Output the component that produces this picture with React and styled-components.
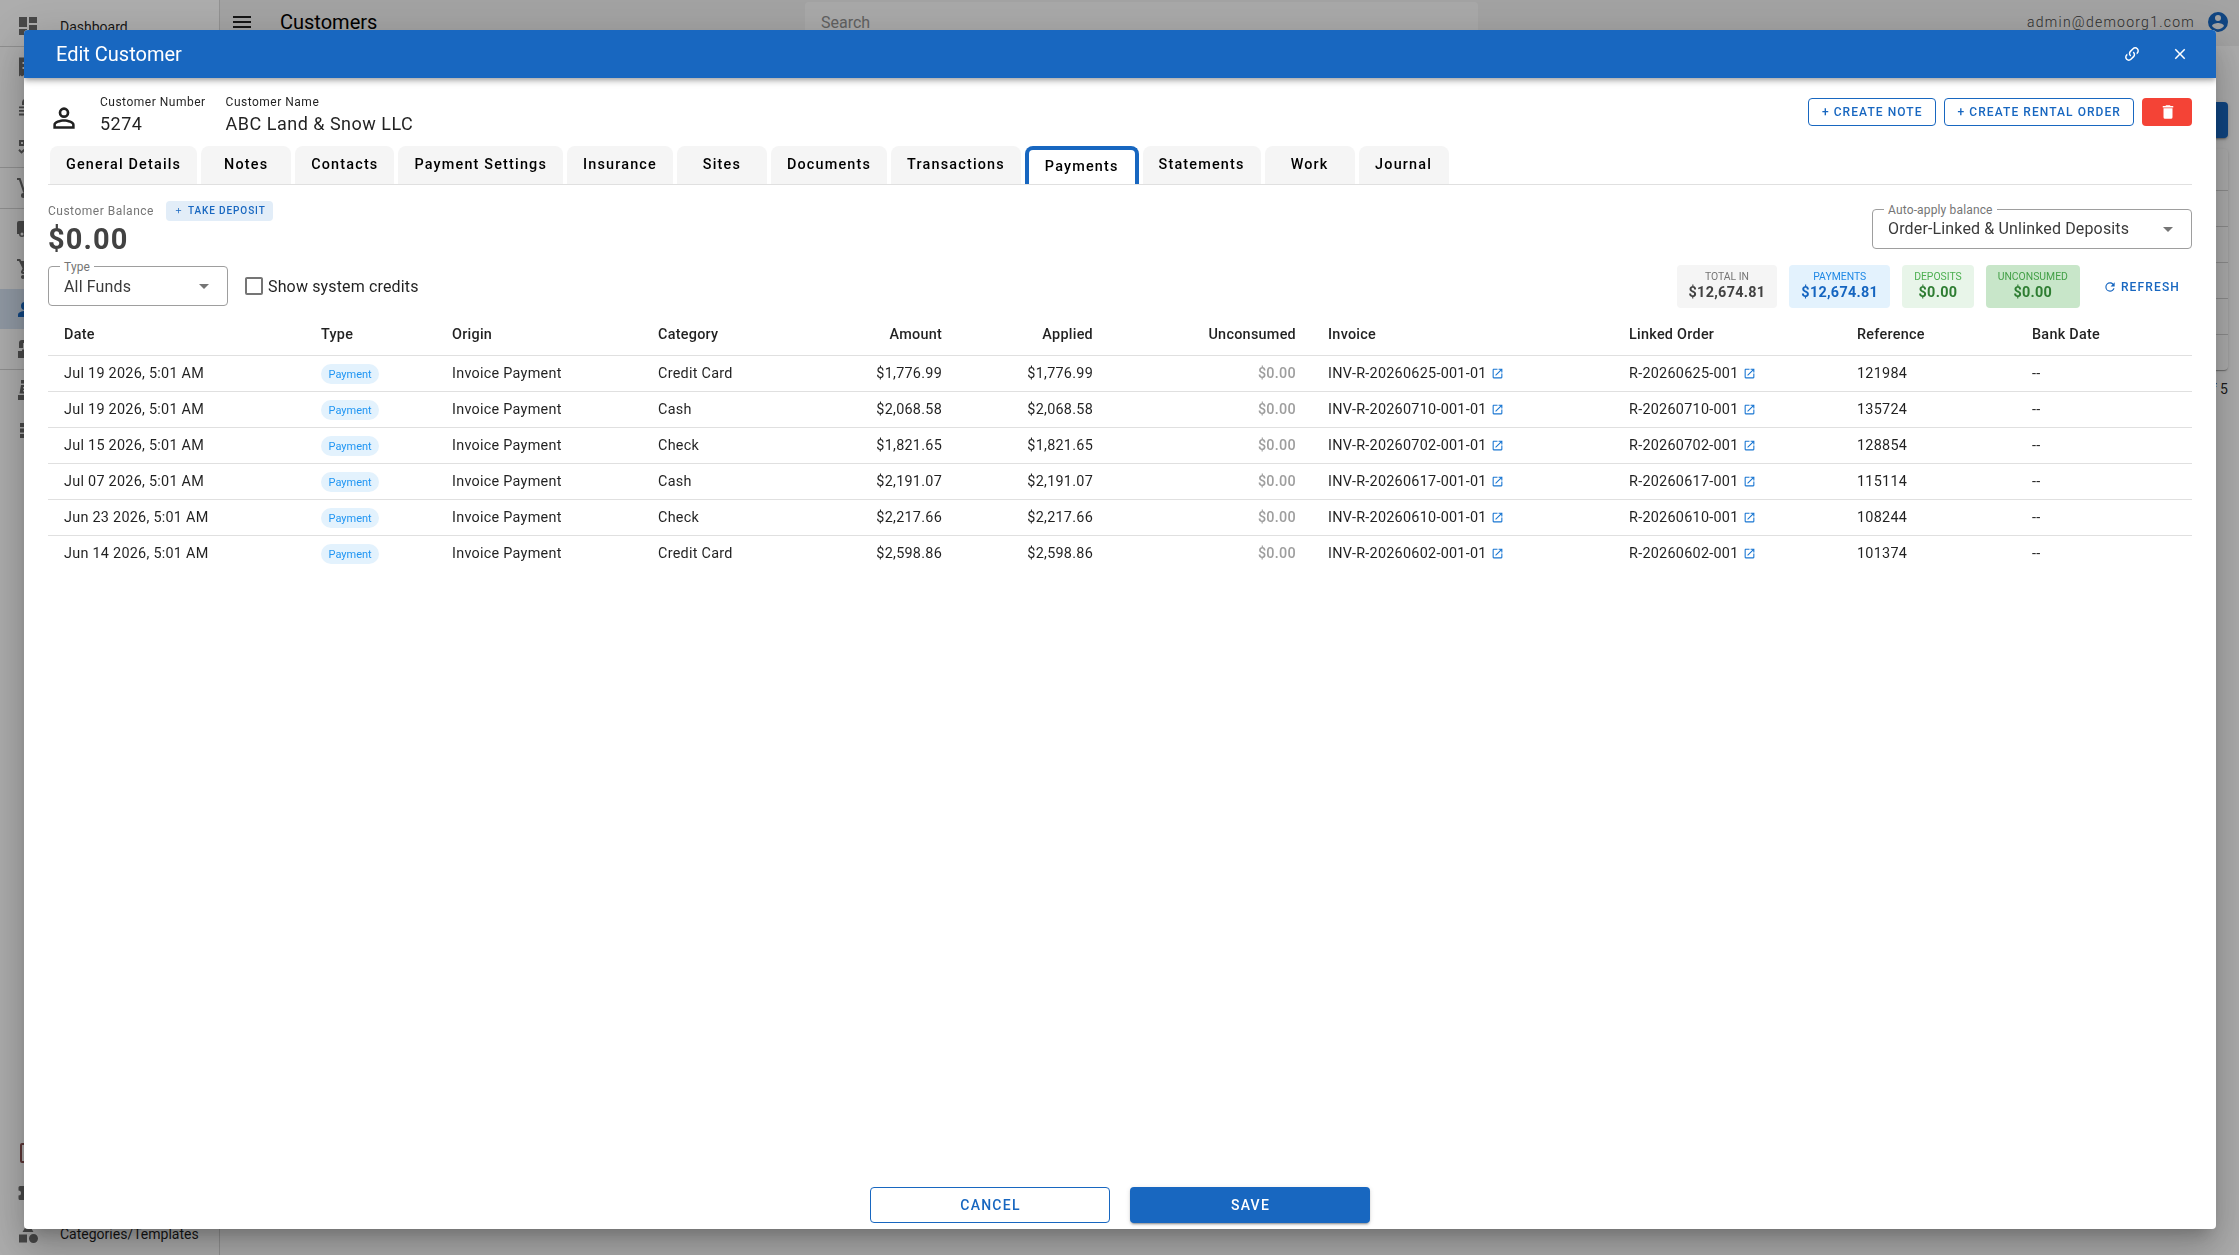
import React from 'react';
import styled, { createGlobalStyle } from 'styled-components';

const GlobalStyle = createGlobalStyle`
  *, *::before, *::after { box-sizing: border-box; }
  html, body { margin: 0; height: 100%; overflow: hidden; }
  body { font-family: Roboto, "Liberation Sans", sans-serif; font-size: 14px; color: rgba(0, 0, 0, 0.87); background: #fff; }
  button { font-family: inherit; }
`;

const P = {
  dashboard: 'M13,3V9H21V3M13,21H21V11H13M3,21H11V15H3M3,13H11V3H3V13Z',
  receipt: 'M3,2.5H21V21.5L19.5,20.2L18,21.5L16.500,20.2L15,21.500L13.500,20.2L12,21.5L10.5,20.2L9,21.5L7.500,20.2L6,21.5L4.5,20.2L3,21.5V2.5M6.5,7V9H17.500V7H6.5M6.5,12V14H17.5V12H6.5Z',
  stack: 'M3,11.5H21V13.2H3V11.5M3,15H21V16.8H3V15M3,18.600H21V20.4H3V18.6M7,4.500H17V10H6V7Z',
  checks: 'M3,5H9V11H3V5M5,7V9H7V7H5M11,7H21V9H11V7M2.300,15.500L3.700,14.100L5.500,15.9L9.500,12.400L10.9,13.8L5.500,18.800L2.300,15.500M12,15H21V17H12V15Z',
  dolly: 'M1,2H4.500L8.800,14.500L16,11L17,13L8,17.500L7,16L3,4H1V2M7.500,17A2.500,2.500 0 1,1 7.490,22A2.500,2.500 0 0,1 7.500,17M8,4L14,2L16,9L10,11.500L8,4Z',
  truck: 'M3,4A2,2 0 0,0 1,6V17H3A3,3 0 0,0 6,20A3,3 0 0,0 9,17H15A3,3 0 0,0 18,20A3,3 0 0,0 21,17H23V12L20,8H17V4M6,15.500A1.500,1.500 0 1,1 6,18.500A1.500,1.500 0 0,1 6,15.500Z',
  cart: 'M17,18A2,2 0 0,1 19,20A2,2 0 0,1 17,22C15.89,22 15,21.1 15,20C15,18.89 15.89,18 17,18M1,2H4.27L5.21,4H20A1,1 0 0,1 21,5C21,5.17 20.95,5.34 20.88,5.5L17.3,11.97C16.96,12.58 16.3,13 15.55,13H8.1L7.2,14.63L7.17,14.75A0.25,0.25 0 0,0 7.42,15H19V17H7C5.89,17 5,16.1 5,15C5,14.65 5.09,14.32 5.24,14.04L6.6,11.59L3,4H1V2M7,18A2,2 0 0,1 9,20A2,2 0 0,1 7,22C5.89,22 5,21.1 5,20C5,18.89 5.89,18 7,18Z',
  people: 'M9,5A4,4 0 0,1 13,9A4,4 0 0,1 9,13A4,4 0 0,1 5,9A4,4 0 0,1 9,5M9,14C12,14 17,15 17,18V20H2V18C2,15 6,14 9,14M16,5A4,4 0 1,1 15,12.800A5.800,5.800 0 0,0 15,5.200Z',
  archive: 'M6,3H18A3,3 0 0,1 21,6V11H17V6H7V11H3V6A3,3 0 0,1 6,3M2,14H6V12.500H9V14H15V12.500H18V14H22V21H2V14Z',
  register: 'M2,17H22V22H2V17M5,7H19L20.500,15.500H3.500L5,7M5,2H11V5.500H5V2M7,9V10.5H9V9H7M7,12V13.5H9V12H7Z',
  list: 'M4,5H9V9H4V5M4,10.500H9V14.500H4V10.5M4,16H9V20H4V16M10.500,5H21V9H10.500V5M10.500,10.5H21V14.5H10.500V10.500M10.500,16H21V20H10.500V16Z',
  page: 'M6,2H18A2,2 0 0,1 20,4V20A2,2 0 0,1 18,22H6A2,2 0 0,1 4,20V4A2,2 0 0,1 6,2M6,4V20H18V4H6Z',
  puzzle: 'M4,5H9A2.500,2.500 0 0,1 14,5H19V10A2.500,2.500 0 0,1 19,15V19H14A2.500,2.500 0 0,0 9,19H4A1.500,1.500 0 0,1 2.500,17.500V14.500A2.500,2.500 0 0,0 2.500,9.500V6.500A1.500,1.500 0 0,1 4,5Z',
  shape: 'M11,13.5V21.5H3V13.5H11M12,2L17.5,11H6.5L12,2M17.5,13C20,13 22,15 22,17.5C22,20 20,22 17.5,22C15,22 13,20 13,17.5C13,15 15,13 17.5,13Z',
  menu: 'M3,6H21V8H3V6M3,11H21V13H3V11M3,16H21V18H3V16Z',
  accountCircle: 'M12,19.2C9.5,19.2 7.29,17.92 6,16C6.03,14 10,12.9 12,12.9C14,12.9 17.97,14 18,16C16.71,17.92 14.5,19.2 12,19.2M12,5A3,3 0 0,1 15,8A3,3 0 0,1 12,11A3,3 0 0,1 9,8A3,3 0 0,1 12,5M12,2A10,10 0 0,0 2,12A10,10 0 0,0 12,22A10,10 0 0,0 22,12C22,6.47 17.5,2 12,2Z',
  link: 'M10.59,13.41C11,13.8 11,14.44 10.59,14.83C10.2,15.22 9.56,15.22 9.17,14.83C7.22,12.88 7.22,9.71 9.17,7.76V7.76L12.71,4.22C14.66,2.27 17.83,2.27 19.78,4.22C21.73,6.17 21.73,9.34 19.78,11.29L18.29,12.78C18.3,11.96 18.17,11.14 17.89,10.36L18.36,9.88C19.54,8.71 19.54,6.81 18.36,5.64C17.19,4.46 15.29,4.46 14.12,5.64L10.59,9.17C9.41,10.34 9.41,12.24 10.59,13.41M13.41,9.17C13.8,8.78 14.44,8.78 14.83,9.17C16.78,11.12 16.78,14.29 14.83,16.24V16.24L11.29,19.78C9.34,21.73 6.17,21.73 4.22,19.78C2.27,17.83 2.27,14.66 4.22,12.71L5.71,11.22C5.7,12.04 5.83,12.86 6.11,13.65L5.64,14.12C4.46,15.29 4.46,17.19 5.64,18.36C6.81,19.54 8.71,19.54 9.88,18.36L13.41,14.83C14.59,13.66 14.59,11.76 13.41,10.59C13,10.2 13,9.56 13.41,9.17Z',
  close: 'M19,6.41L17.59,5L12,10.59L6.41,5L5,6.41L10.59,12L5,17.59L6.41,19L12,13.41L17.59,19L19,17.59L13.41,12L19,6.41Z',
  account: 'M12,4A4,4 0 0,1 16,8A4,4 0 0,1 12,12A4,4 0 0,1 8,8A4,4 0 0,1 12,4M12,6A2,2 0 0,0 10,8A2,2 0 0,0 12,10A2,2 0 0,0 14,8A2,2 0 0,0 12,6M12,13C14.67,13 20,14.33 20,17V20H4V17C4,14.33 9.33,13 12,13M12,14.9C9.03,14.9 5.9,16.36 5.9,17V18.1H18.1V17C18.1,16.36 14.97,14.9 12,14.9Z',
  trash: 'M19,4H15.5L14.5,3H9.5L8.5,4H5V6H19M6,19A2,2 0 0,0 8,21H16A2,2 0 0,0 18,19V7H6V19Z',
  plus: 'M19,13H13V19H11V13H5V11H11V5H13V11H19V13Z',
  down: 'M7,10L12,15L17,10H7Z',
  box: 'M19,3H5C3.89,3 3,3.89 3,5V19A2,2 0 0,0 5,21H19A2,2 0 0,0 21,19V5C21,3.89 20.1,3 19,3M19,5V19H5V5H19Z',
  refresh: 'M17.65,6.35C16.2,4.9 14.21,4 12,4A8,8 0 0,0 4,12A8,8 0 0,0 12,20C15.73,20 18.84,17.45 19.73,14H17.65C16.83,16.33 14.61,18 12,18A6,6 0 0,1 6,12A6,6 0 0,1 12,6C13.66,6 15.14,6.69 16.22,7.78L13,11H20V4L17.65,6.35Z',
  open: 'M14,3V5H17.59L7.76,14.83L9.17,16.24L19,6.41V10H21V3M19,19H5V5H12V3H5C3.89,3 3,3.9 3,5V19A2,2 0 0,0 5,21H19A2,2 0 0,0 21,19V12H19V19Z',
};

const Svg = styled.svg`
  display: block;
  flex: none;
  width: ${p => p.$size}px;
  height: ${p => p.$size}px;
  fill: currentColor;
  fill-rule: evenodd;
`;
const Icon = ({ name, size = 24 }) => (
  <Svg $size={size} viewBox="0 0 24 24" aria-hidden="true"><path d={P[name]} /></Svg>
);

/* ---------- page behind the dialog ---------- */
const Page = styled.div`display: flex; height: 100vh; overflow: hidden;`;
const Sidebar = styled.nav`
  display: flex; flex-direction: column;
  width: 220px; flex: none;
  padding: 6px 0 2px;
  border-right: 1px solid #d8d8d8;
`;
const NavItem = styled.div`
  display: flex; align-items: center; gap: 20px;
  height: 40px; flex: none; padding: 0 16px;
  white-space: nowrap;
  color: ${p => (p.$active ? '#1867c0' : p.$tone || '#6b6b6b')};
  background: ${p => (p.$active ? '#d5e2f2' : 'transparent')};
`;
const NavText = styled.span`color: #1f1f1f; padding-top: 2px;`;
const NavRule = styled.div`height: 1px; flex: none; background: #d4d4d4;`;
const Spacer = styled.div`flex: 1;`;

const Main = styled.div`flex: 1; display: flex; flex-direction: column;`;
const AppBar = styled.header`
  display: flex; align-items: center;
  height: 46px; flex: none; padding: 0 9px 2px 10px;
  background: #f1f1f1;
`;
const PageTitle = styled.h1`margin: 0 0 0 26px; width: 525px; font-size: 20px; font-weight: 400; color: #000;`;
const Search = styled.div`
  width: 673px; height: 40px; padding: 1px 16px 0; border-radius: 4px;
  font-size: 16px; line-height: 40px; color: #8f8f8f; background: #fafafa;
`;
const User = styled.div`
  display: flex; align-items: center; gap: 11px; margin-left: auto;
  font-size: 14px; font-weight: 300; color: #444; letter-spacing: 1.25px;
`;
const UserIcon = styled.span`color: #1867c0;`;
const Content = styled.div`display: flex; flex-direction: column; align-items: flex-end; padding: 56px 11px 0 0;`;
const AddButton = styled.div`
  width: 120px; height: 36px; border-radius: 4px; background: #1867c0;
  box-shadow: 0 3px 1px -2px rgba(0,0,0,.2), 0 2px 2px rgba(0,0,0,.14), 0 1px 5px rgba(0,0,0,.12);
`;
const List = styled.div`
  width: 1980px; margin-top: 11px; border-radius: 4px;
  box-shadow: 0 2px 1px -1px rgba(0,0,0,.2), 0 1px 1px rgba(0,0,0,.14), 0 1px 3px rgba(0,0,0,.12);
`;
const ListRow = styled.div`
  height: ${p => (p.$head ? 41 : 36)}px;
  & + & { border-top: 1px solid #d0d0d0; }
`;
const Pager = styled.div`padding-top: 11px; font-size: 14px;`;

/* ---------- dialog ---------- */
const Scrim = styled.div`
  position: fixed; inset: 0;
  padding: 30px 23px 26px 24px;
  background: rgba(0, 0, 0, 0.32);
`;
const Dialog = styled.section`
  display: flex; flex-direction: column;
  height: 100%; overflow: hidden;
  border-radius: 4px; background: #fff;
  box-shadow: 0 11px 15px -7px rgba(0,0,0,.2), 0 24px 38px 3px rgba(0,0,0,.14), 0 9px 46px 8px rgba(0,0,0,.12);
`;
const TitleBar = styled.header`
  display: flex; align-items: center; gap: 30px;
  height: 48px; flex: none; padding: 0 27px 0 32px;
  color: #fff; background: #1867c0;
  box-shadow: 0 2px 4px -1px rgba(0,0,0,.2), 0 4px 5px rgba(0,0,0,.14), 0 1px 10px rgba(0,0,0,.12);
`;
const Title = styled.h2`margin: 0 auto 0 0; font-size: 20px; font-weight: 400;`;
const Body = styled.div`flex: 1; display: flex; flex-direction: column; padding: 0 24px 6px;`;

const Summary = styled.div`display: flex; height: 68px; flex: none;`;
const Avatar = styled.div`padding-top: 24px; width: 52px; color: #212121;`;
const Fact = styled.dl`margin: 0 20px 0 0; padding-top: 15px; letter-spacing: 0.5px;`;
const FactLabel = styled.dt`font-size: 12px; line-height: 18px;`;
const FactValue = styled.dd`margin: 0; font-size: 18px; line-height: 26px;`;
const Actions = styled.div`display: flex; gap: 8px; margin: 20px 0 0 auto;`;

const Button = styled.button`
  display: flex; align-items: center; justify-content: center;
  height: ${p => p.$h || 28}px;
  width: ${p => (p.$w ? `${p.$w}px` : 'auto')};
  padding: 0 12px 0 13px;
  border: 1px solid ${p => p.$border || 'transparent'};
  border-radius: 4px;
  font-size: ${p => p.$font || 12}px; font-weight: 500;
  letter-spacing: 0.0892857em; text-transform: uppercase; white-space: nowrap;
  color: ${p => p.$color || '#1867c0'};
  background: ${p => p.$bg || 'transparent'};
  box-shadow: ${p => (p.$raised ? '0 3px 1px -2px rgba(0,0,0,.2), 0 2px 2px rgba(0,0,0,.14), 0 1px 5px rgba(0,0,0,.12)' : 'none')};
`;

const Tabs = styled.div`
  display: flex; gap: 4px; height: 39px; flex: none; padding-left: 2px;
  border-bottom: 1px solid #e0e0e0;
`;
const Tab = styled.div`
  display: flex; align-items: center; justify-content: center;
  min-width: 90px; padding: 0 16px 2px;
  border-radius: 8px 8px 0 0;
  font-size: 14.4px; font-weight: 500; letter-spacing: 1.18px; color: #000;
  background: ${p => (p.$active ? '#fff' : '#f5f5f5')};
  border: 0 solid #1867c0;
  border-width: ${p => (p.$active ? '4px 4px 0' : '0')};
`;

const BalanceRow = styled.div`display: flex; justify-content: space-between; height: 80px; flex: none; padding-top: 16px;`;
const BalanceHead = styled.div`display: flex; align-items: center; gap: 12px; height: 20px; font-size: 12px; letter-spacing: 0.5px; color: #757575;`;
const Deposit = styled.button`
  display: flex; align-items: center; gap: 5px;
  height: 20px; width: 107px; padding: 0 0 1px 8px; border: 0; border-radius: 4px;
  font-size: 10px; font-weight: 500; letter-spacing: 0.0892857em; white-space: nowrap;
  color: #1867c0; background: #e2edf8;
`;
const Balance = styled.div`font-size: 29px; line-height: 36px; font-weight: 700; letter-spacing: 1.1px; color: #424242;`;

const SelectBox = styled.div`
  position: relative;
  display: flex; align-items: center; justify-content: space-between;
  width: ${p => p.$w}px; height: 40px; margin-top: ${p => p.$mt || 0}px; padding: 0 11px 0 15px;
  border: 1px solid #9e9e9e; border-radius: 4px;
  font-size: 16px; letter-spacing: 0.15px; color: #3a3a3a;
`;
const SelectLabel = styled.span`
  position: absolute; top: -8px; left: 11px; padding: 0 4px;
  font-size: 12px; line-height: 16px; color: #757575; background: #fff;
`;
const SelectValue = styled.span`padding-bottom: ${p => p.$lift || 0}px;`;
const Caret = styled.span`color: #757575;`;
const Select = ({ label, value, w, mt, lift }) => (
  <SelectBox $w={w} $mt={mt}>
    <SelectLabel>{label}</SelectLabel><SelectValue $lift={lift}>{value}</SelectValue><Caret><Icon name="down" /></Caret>
  </SelectBox>
);

const FilterRow = styled.div`display: flex; height: 43px; flex: none;`;
const Check = styled.label`
  display: flex; align-items: center; gap: 2px; height: 42px; margin-left: 14px;
  font-size: 16px; letter-spacing: 0.15px;
`;
const CheckIcon = styled.span`color: #757575;`;
const Totals = styled.div`display: flex; gap: 12px; margin-left: auto;`;
const Total = styled.div`
  height: 43px; padding: 4px 12px 0; border-radius: 4px; text-align: center;
  color: ${p => p.$value}; background: ${p => p.$bg};
`;
const TotalLabel = styled.div`font-size: 10.4px; line-height: 15px; color: ${p => p.$color};`;
const TotalValue = styled.div`font-size: 14.4px; line-height: 18px; font-weight: 700; letter-spacing: 0.3px;`;
const Refresh = styled.button`
  display: flex; align-items: center; gap: 4px; height: 43px;
  margin-left: 11px; padding: 0 12px; border: 0; background: none;
  font-size: 12px; font-weight: 500; letter-spacing: 1.15px; color: #1867c0;
`;

const Table = styled.div`display: flex; flex-direction: column;`;
const Row = styled.div`
  display: grid;
  grid-template-columns: 257px 131px 206px 316px 151px 203px 301px 228px 175px 1fr;
  flex: none;
  height: ${p => (p.$head ? 40 : 36)}px;
  margin-top: ${p => (p.$head ? 8 : 0)}px;
  padding-bottom: ${p => (p.$head ? 2 : 1)}px;
  font-weight: ${p => (p.$head ? 500 : 400)};
  font-size: 14.4px; letter-spacing: 0.27px; white-space: nowrap;
  border-bottom: 1px solid #e0e0e0;
  &:last-child { border-bottom-color: transparent; }
`;
const Cell = styled.div`
  display: flex; align-items: center; gap: 4px; padding: 0 16px;
  justify-content: ${p => (p.$right ? 'flex-end' : 'flex-start')};
  color: ${p => (p.$muted ? '#9e9e9e' : 'inherit')};
  font-weight: ${p => (p.$muted ? 500 : 'inherit')};
`;
const CategoryAmount = styled.div`display: flex; justify-content: space-between;`;
const Pill = styled.span`
  height: 20px; margin-top: 2px; padding: 0 7.500px; border-radius: 10px;
  font-size: 11px; line-height: 21px; letter-spacing: 0;
  color: #2196f3; background: #e3f2fd;
`;
const OpenIcon = styled.span`color: #1976d2; padding-top: 1px;`;
const Footer = styled.footer`display: flex; justify-content: center; gap: 20px; margin-top: auto;`;

const tabs = ['General Details', 'Notes', 'Contacts', 'Payment Settings', 'Insurance', 'Sites', 'Documents', 'Transactions', 'Payments', 'Statements', 'Work', 'Journal'];
const rows = [
  ['Jul 19 2026, 5:01 AM', 'Credit Card', '$1,776.99', '20260625-001', '121984'],
  ['Jul 19 2026, 5:01 AM', 'Cash', '$2,068.58', '20260710-001', '135724'],
  ['Jul 15 2026, 5:01 AM', 'Check', '$1,821.65', '20260702-001', '128854'],
  ['Jul 07 2026, 5:01 AM', 'Cash', '$2,191.07', '20260617-001', '115114'],
  ['Jun 23 2026, 5:01 AM', 'Check', '$2,217.66', '20260610-001', '108244'],
  ['Jun 14 2026, 5:01 AM', 'Credit Card', '$2,598.86', '20260602-001', '101374'],
];
const totals = [
  ['TOTAL IN', '$12,674.81', '#757575', '#424242', '#f5f5f5'],
  ['PAYMENTS', '$12,674.81', '#1e88e5', '#1565c0', '#e3f2fd'],
  ['DEPOSITS', '$0.00', '#4caf50', '#2e7d32', '#e8f5e9'],
  ['UNCONSUMED', '$0.00', '#43a047', '#2e7d32', '#c8e6c9'],
];
const nav = [
  ['dashboard', 'Dashboard'], null, ['receipt'], ['stack'], ['checks'], null, ['dolly'], null,
  ['truck'], ['cart'], ['people', '', true], ['archive'], null, ['register'], ['list'],
];

export default function App() {
  return (
    <>
      <GlobalStyle />
      <Page>
        <Sidebar>
          {nav.map((n, i) => n
            ? <NavItem key={i} $active={n[2]}><Icon name={n[0]} />{n[1] && <NavText>{n[1]}</NavText>}</NavItem>
            : <NavRule key={i} />)}
          <Spacer />
          <NavItem $tone="#8a5050"><Icon name="page" /></NavItem>
          <NavItem><Icon name="puzzle" /></NavItem>
          <NavItem><Icon name="shape" /><NavText>Categories/Templates</NavText></NavItem>
        </Sidebar>
        <Main>
          <AppBar>
            <Icon name="menu" />
            <PageTitle>Customers</PageTitle>
            <Search>Search</Search>
            <User>admin@demoorg1.com<UserIcon><Icon name="accountCircle" /></UserIcon></User>
          </AppBar>
          <Content>
            <AddButton />
            <List>{[1, 0, 0, 0, 0, 0].map((h, i) => <ListRow key={i} $head={h} />)}</List>
            <Pager>of 5</Pager>
          </Content>
        </Main>
      </Page>
      <Scrim>
        <Dialog role="dialog">
          <TitleBar>
            <Title>Edit Customer</Title>
            <Icon name="link" size={18} />
            <Icon name="close" size={18} />
          </TitleBar>
          <Body>
            <Summary>
              <Avatar><Icon name="account" size={32} /></Avatar>
              <Fact><FactLabel>Customer Number</FactLabel><FactValue>5274</FactValue></Fact>
              <Fact><FactLabel>Customer Name</FactLabel><FactValue>ABC Land &amp; Snow LLC</FactValue></Fact>
              <Actions>
                <Button $border="#1867c0">+ Create Note</Button>
                <Button $border="#1867c0">+ Create Rental Order</Button>
                <Button $w={50} $bg="#f44336" $color="#fff"><Icon name="trash" size={18} /></Button>
              </Actions>
            </Summary>
            <Tabs>{tabs.map(t => <Tab key={t} $active={t === 'Payments'}>{t}</Tab>)}</Tabs>
            <BalanceRow>
              <div>
                <BalanceHead>Customer Balance<Deposit><Icon name="plus" size={9} />TAKE DEPOSIT</Deposit></BalanceHead>
                <Balance>$0.00</Balance>
              </div>
              <Select label="Auto-apply balance" value="Order-Linked &amp; Unlinked Deposits" w={320} mt={8} lift={1} />
            </BalanceRow>
            <FilterRow>
              <Select label="Type" value="All Funds" w={180} mt={1} />
              <Check><CheckIcon><Icon name="box" /></CheckIcon>Show system credits</Check>
              <Totals>
                {totals.map(([l, v, lc, vc, bg]) => (
                  <Total key={l} $value={vc} $bg={bg}><TotalLabel $color={lc}>{l}</TotalLabel><TotalValue>{v}</TotalValue></Total>
                ))}
              </Totals>
              <Refresh><Icon name="refresh" size={14} />REFRESH</Refresh>
            </FilterRow>
            <Table>
              <Row $head>
                <Cell>Date</Cell>
                <Cell>Type</Cell>
                <Cell>Origin</Cell>
                <CategoryAmount><Cell>Category</Cell><Cell>Amount</Cell></CategoryAmount>
                <Cell $right>Applied</Cell>
                <Cell $right>Unconsumed</Cell>
                <Cell>Invoice</Cell>
                <Cell>Linked Order</Cell>
                <Cell>Reference</Cell>
                <Cell>Bank Date</Cell>
              </Row>
              {rows.map(([date, cat, amt, ord, ref]) => (
                <Row key={ord}>
                  <Cell>{date}</Cell>
                  <Cell><Pill>Payment</Pill></Cell>
                  <Cell>Invoice Payment</Cell>
                  <CategoryAmount><Cell>{cat}</Cell><Cell>{amt}</Cell></CategoryAmount>
                  <Cell $right>{amt}</Cell>
                  <Cell $right $muted>$0.00</Cell>
                  <Cell>INV-R-{ord}-01<OpenIcon><Icon name="open" size={13} /></OpenIcon></Cell>
                  <Cell>R-{ord}<OpenIcon><Icon name="open" size={13} /></OpenIcon></Cell>
                  <Cell>{ref}</Cell>
                  <Cell>--</Cell>
                </Row>
              ))}
            </Table>
            <Footer>
              <Button $h={36} $w={240} $font={14} $border="#1867c0">Cancel</Button>
              <Button $h={36} $w={240} $font={14} $bg="#1867c0" $color="#fff" $raised>Save</Button>
            </Footer>
          </Body>
        </Dialog>
      </Scrim>
    </>
  );
}
